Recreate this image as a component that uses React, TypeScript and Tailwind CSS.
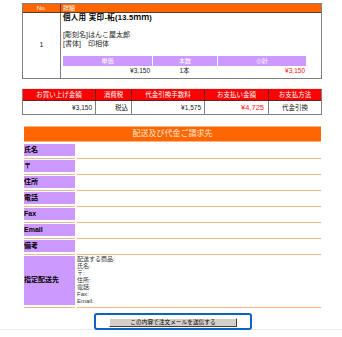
import React from 'react';

const fields = ['氏名', '〒', '住所', '電話', 'Fax', 'Email', '備考'];
const shipLines = ['配送する商品:', '氏名:', '〒:', '住所:', '電話:', 'Fax:', 'Email:'];

function FormRow({ label, children, tall }: { label: string; children?: React.ReactNode; tall?: boolean }) {
  return (
    <div className="grid grid-cols-[51px_1fr] gap-x-[2px] mb-[1px]">
      <div className="pb-[2px] border-b border-[#ffb380]">
        <div
          className={
            'bg-[#cc99ff] flex items-center text-[7px] font-bold text-black ' +
            (tall ? 'h-[49px]' : 'h-[12px]')
          }
        >
          {label}
        </div>
      </div>
      <div className="pb-[2px] border-b border-[#ffb380]">{children}</div>
    </div>
  );
}

export default function App() {
  return (
    <div className="w-[342px] h-[337px] bg-white overflow-hidden font-['Liberation_Sans','Noto_Sans_CJK_JP',sans-serif] text-[#222]">
      <div className="ml-[22px] w-[300px] pt-[3px]">
        {/* order item */}
        <div className="border border-[#7f7f7f]">
          <div className="flex h-[9px] bg-[#ff6600] border-b border-[#5a3a20] text-white text-[6px] leading-[9px]">
            <div className="w-[38px] text-center border-r border-[#5a3a20]">No.</div>
            <div className="pl-[2px]">詳細</div>
          </div>
          <div className="flex">
            <div className="w-[38px] flex items-center justify-center border-r border-[#7f7f7f] text-[7px]">1</div>
            <div className="flex-1 pl-[2px] pb-[2px] text-[7px]">
              <div className="h-[9px] leading-[9px] font-bold text-black text-[7.5px] tracking-[0.3px]">個人用 実印-柘(13.5ｍｍ)</div>
              <div className="mt-[8px] leading-[9px]">[彫刻名]はんこ屋太郎</div>
              <div className="leading-[9px]">[書体]　印相体</div>
              <div className="mt-[8px] w-[243px]">
                <div className="flex h-[10px] bg-[#cc99ff] text-white text-[6px] leading-[10px]">
                  <div className="w-[89px] text-center">単価</div>
                  <div className="w-[65px] text-center border-l border-white">本数</div>
                  <div className="flex-1 text-center border-l border-white">小計</div>
                </div>
                <div className="flex h-[10px] leading-[10px] text-[6.5px]">
                  <div className="w-[89px] text-right pr-[2px]">¥3,150</div>
                  <div className="w-[65px] text-center">1本</div>
                  <div className="flex-1 text-right pr-[1px] text-[#ff2020]">¥3,150</div>
                </div>
              </div>
            </div>
          </div>
        </div>

        <div className="mt-[9px] h-[1px] bg-[#e2eeee]" />

        {/* totals */}
        <div className="border border-[#7f7f7f] border-t-0 text-[6.5px]">
          <div className="grid grid-cols-[72px_36px_73px_64px_1fr] h-[12px] bg-[#ff0000] text-white leading-[11px] border-b border-[#6b2020]">
            <div className="text-center">お買い上げ金額</div>
            <div className="text-center border-l border-[#6b2020]">消費税</div>
            <div className="text-center border-l border-[#6b2020]">代金引換手数料</div>
            <div className="text-center border-l border-[#6b2020]">お支払い金額</div>
            <div className="text-center border-l border-[#6b2020]">お支払方法</div>
          </div>
          <div className="grid grid-cols-[72px_36px_73px_64px_1fr] h-[13px] leading-[13px]">
            <div className="text-right pr-[3px]">¥3,150</div>
            <div className="text-right pr-[3px] border-l border-[#7f7f7f]">税込</div>
            <div className="text-right pr-[3px] border-l border-[#7f7f7f]">¥1,575</div>
            <div className="text-right pr-[4px] border-l border-[#7f7f7f] text-[7.5px] text-[#ff2020]">¥4,725</div>
            <div className="text-center border-l border-[#7f7f7f]">代金引換</div>
          </div>
        </div>
      </div>

      {/* shipping / billing form */}
      <div className="ml-[24px] w-[297px] mt-[11px]">
        <div className="h-[16px] bg-[#ff6600] border-y border-[#ffb380] text-center text-[8px] leading-[14px] text-[#ffe8d8]">
          配送及び代金ご請求先
        </div>
        <div className="mt-[2px]">
          {fields.map((f) => (
            <FormRow key={f} label={f} />
          ))}
          <FormRow label="指定配送先" tall>
            <div className="text-[6px] leading-[7px] text-[#333]">
              {shipLines.map((l) => (
                <div key={l}>{l}</div>
              ))}
            </div>
          </FormRow>
        </div>
      </div>

      <div className="mt-[5px] flex justify-center border-b border-[#ececec]">
        <div className="relative -mb-[1px] ml-[4px] w-[158px] h-[17px] border-2 border-[#0e63c2] rounded-[3px] bg-white pt-[3px] px-[13px]">
          <button className="block w-full h-[9px] bg-[#d4d0c8] border border-t-white border-l-white border-r-[#404040] border-b-[#404040] text-[5.7px] leading-[7px] text-black">
            この内容で注文メールを送信する
          </button>
        </div>
      </div>
    </div>
  );
}
